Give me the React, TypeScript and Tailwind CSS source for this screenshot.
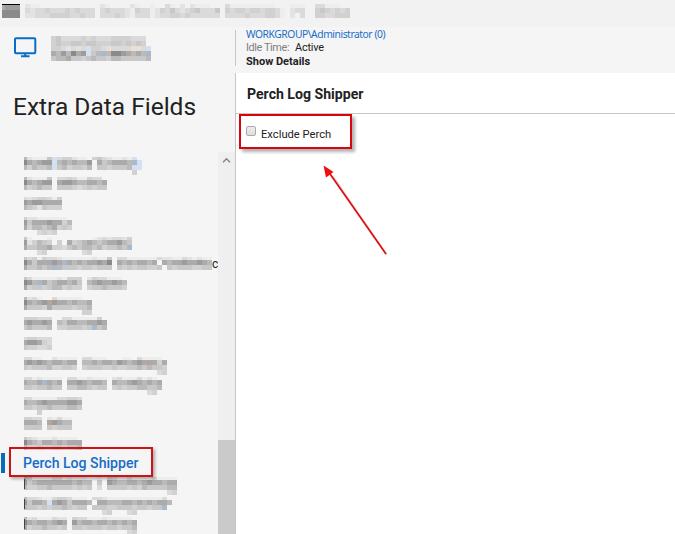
import React from "react";

// Shade ramp for the redaction mosaic, from clear to darkest.
const SHADES = [
  "bg-transparent",
  "bg-[#ededed]",
  "bg-[#e3e3e3]",
  "bg-[#dadada]",
  "bg-[#d1d1d1]",
  "bg-[#c8c8c8]",
  "bg-[#bababa]",
  "bg-[#ababab]",
  "bg-[#9c9c9c]",
  "bg-[#8a8a8a]",
];
const TINTS: Record<string, string> = {
  b: "bg-[#d3e1f2]",
  c: "bg-[#a9b8ca]",
  o: "bg-[#eadfd2]",
  p: "bg-[#b5a59a]",
};

function MosaicRow({ cells, height, first }: { cells: string; height: string; first: string }) {
  return (
    <div className={`flex ${height}`}>
      {cells.split("").map((c, i) => (
        <span key={i} className={`h-full shrink-0 ${i === 0 ? first : "w-[5px]"} ${TINTS[c] ?? SHADES[Number(c)]}`} />
      ))}
    </div>
  );
}

const HEIGHTS = ["h-[3px]", "h-[5px]", "h-[5px]", "h-[5px]"];

function Mosaic({ rows, edge = false, tail }: { rows: string[]; edge?: boolean; tail?: string }) {
  return (
    <div className="relative h-5 overflow-visible">
      {rows.map((r, i) => (
        <MosaicRow key={i} cells={r} height={HEIGHTS[i]} first="w-[3px]" />
      ))}
      {edge && <span className="absolute left-0 top-[2px] h-[10px] w-px bg-[#4a4038]" />}
      {tail && <span className="absolute left-[188px] top-0 bg-[#f5f5f5] text-[12px] leading-[14px]">{tail}</span>}
    </div>
  );
}

const ABOVE: string[][] = [
  ["621115b344211045321121b0", "976788b676766807567776cb", "646556b564554605545556bb", "000000000000000000000040"],
  ["62111503343114330", "97678807887667767", "64565505554345455"],
  ["32344314", "87887777", "65425444"],
  ["4221111110", "8577787746", "7466567454", "0003434000"],
  ["5100010000000012323324", "8246540407456765677865", "755667443565665645565c", "0003400000003400000000"],
  ["53414332111111211503311111132211321211", "97577787c76767787907676776707677877876", "755656c6555455455505454554450545554455"],
  ["531111121444024331110", "986c75677675067877876", "745545664544045565554"],
  ["62310031111100", "97678p87767667", "75554755554556", "00000000000044"],
  ["44433300331111140", "78778706577667787", "56555604455545c56"],
  ["344333", "788743", "544334"],
  ["33110021111033111000110311110", "7878767767706676776876787p747", "54555644554045554454455656554", "0000000000000000000000000003400"],
  ["3312111103311211102311131210", "7667c76707787677607667876767", "5545565505566545504545566556", "0000000000000000000000000340"],
  ["331111133443", "766787777887", "554556555665", "000400000000"],
  ["4433021311", "77760p8766", "5555054555"],
  ["532111211110", "976577676777", "644544554556"],
];
const BELOW: string[][] = [
  ["6411113312111001043113111131111", "8567777777676605087667767877677", "6445565555454503055554546555566", "0000000000000000000000000000034"],
  ["63321134431110332111111111113", "85776b787577760776667767676776", "6554545565455055544555455455c", "0000000000000000340003400000"],
  ["62311132204331112111110", "97677678708677677676767", "74556554505545554554556", "00000000000000000000034"],
];

function MonitorIcon() {
  return (
    <svg width="23" height="21" viewBox="0 0 23 21" fill="none" stroke="#086dc9">
      <rect x="1" y="1.2" width="20.3" height="15" rx="1" strokeWidth="2" />
      <path d="M11.2 16v2.5M7 19.2h8.5" strokeWidth="2" />
    </svg>
  );
}

export default function App() {
  return (
    <div className="relative flex h-[534px] w-[675px] flex-col overflow-hidden bg-[#f5f5f5] font-[Roboto,sans-serif] text-[#222]">
      {/* Title bar */}
      <div className="flex h-[27px] shrink-0 bg-[#f2f2f2] pl-[2px] pt-1">
        <div className="mr-[2px] h-[14px] w-[18px] shrink-0 border-t border-black bg-[#818181]">
          <MosaicRow cells="7888" height="h-[5px]" first="w-[3px]" />
          <MosaicRow cells="9999" height="h-[8px]" first="w-[3px]" />
        </div>
        <div>
          <MosaicRow cells="0211000000000000210000210010031020211100031111111110001110033111000" height="h-[4px]" first="w-[3px]" />
          <MosaicRow cells="0323343334343330343332143312435323453335043443443443102330045434340" height="h-[5px]" first="w-[3px]" />
          <MosaicRow cells="0223334444334330333432133312334434333333033334333443102030044334440" height="h-[5px]" first="w-[3px]" />
        </div>
      </div>

      {/* Machine and session summary */}
      <div className="flex h-[46px] shrink-0">
        <div className="flex w-[235px] shrink-0">
          <div className="ml-[14px] mt-[10px] w-[37px]"><MonitorIcon /></div>
          <div className="mt-[9px]">
            <MosaicRow cells="4533334343334444333" height="h-[5px]" first="w-[5px]" />
            <MosaicRow cells="4544554554445545454" height="h-[5px]" first="w-[5px]" />
            <MosaicRow cells="44323o3b443o3333oo3b" height="h-[5px]" first="w-[5px]" />
            <MosaicRow cells="7686978b56c6998p676c" height="h-[5px]" first="w-[5px]" />
            <MosaicRow cells="56675545655466555556" height="h-[5px]" first="w-[5px]" />
          </div>
        </div>
        <div className="mt-[3px] h-9 w-px bg-[#c8c8c8]" />
        <div className="pl-[10px] text-[10.9px] leading-[14px]">
          <div className="font-['Noto_Sans',sans-serif] text-[10.3px] tracking-[-0.45px] text-[#1b6ec8]">WORKGROUP\Administrator (0)</div>
          <div className="flex leading-[13px]">
            <span className="w-[49px] tracking-[-0.4px] text-[#808080]">Idle Time:</span>
            <span className="tracking-[-0.2px]">Active</span>
          </div>
          <div className="mt-px text-[11px] font-bold">Show Details</div>
        </div>
      </div>

      <div className="flex min-h-0 flex-1">
        <aside className="flex w-[235px] shrink-0 flex-col">
          <h1 className="h-[79px] shrink-0 pl-[13px] pt-[18px] text-[24.5px] leading-8">Extra Data Fields</h1>
          <div className="flex min-h-0 flex-1">
            <div className="w-[218px] shrink-0 overflow-hidden pt-[5px]">
              <div className="pl-6">
                {ABOVE.map((rows, i) => <Mosaic key={i} rows={rows} tail={i === 5 ? "c" : undefined} />)}
              </div>
              <div className="mt-[-4px] flex h-5 items-center">
                <div className="ml-[1px] h-5 w-1 bg-[#086bbb]" />
                <div className="pl-[18px] pt-[2px] text-[14.1px] font-medium text-[#176dca]">Perch Log Shipper</div>
              </div>
              <div className="pl-6 pt-1">
                {BELOW.map((rows, i) => <Mosaic key={i} rows={rows} edge />)}
              </div>
            </div>
            <div className="flex w-[17px] flex-col bg-[#efefef]">
              <svg className="mt-[4px] h-[10px] w-[17px] shrink-0" viewBox="0 0 17 10" fill="none" stroke="#888" strokeWidth="1.5">
                <path d="M5 6.2 8.5 2.7 12 6.2" />
              </svg>
              <div className="mt-[274px] flex-1 bg-[#cacaca]" />
            </div>
          </div>
        </aside>

        <main className="flex-1 border-l border-[#c6c6c6] bg-white">
          <h2 className="h-[41px] border-b border-[#c6c6c6] pl-[11px] text-[14.1px] font-bold leading-[42px]">Perch Log Shipper</h2>
          <label className="flex pl-[10px] pt-[12px]">
            <span className="h-[10px] w-[10px] rounded-[2px] border border-[#aaa] bg-linear-to-b from-[#eee] to-[#ddd]" />
            <span className="ml-[5px] mt-[2px] text-[11.2px] leading-[14px]">Exclude Perch</span>
          </label>
        </main>
      </div>

      {/* Callouts drawn over the window */}
      <div className="absolute left-[239px] top-[114px] h-[35px] w-[113px] border-2 border-[#d8060c] shadow-[3px_3px_3px_rgba(0,0,0,0.3)]" />
      <div className="absolute left-[9px] top-[447px] h-[30px] w-[144px] border-2 border-[#d01216] shadow-[2px_2px_3px_rgba(0,0,0,0.3)]" />
      <svg className="absolute left-[318px] top-[160px]" width="75" height="100" viewBox="0 0 75 100">
        <path d="M15 16 69 95" stroke="#aaa" strokeOpacity=".4" strokeWidth="1.5" />
        <path d="M10 11 68 94" stroke="#e00c10" strokeWidth="1.7" />
        <path d="M5.5 5.5 15.5 12 8 17.5Z" fill="#f20d0d" />
      </svg>
    </div>
  );
}
